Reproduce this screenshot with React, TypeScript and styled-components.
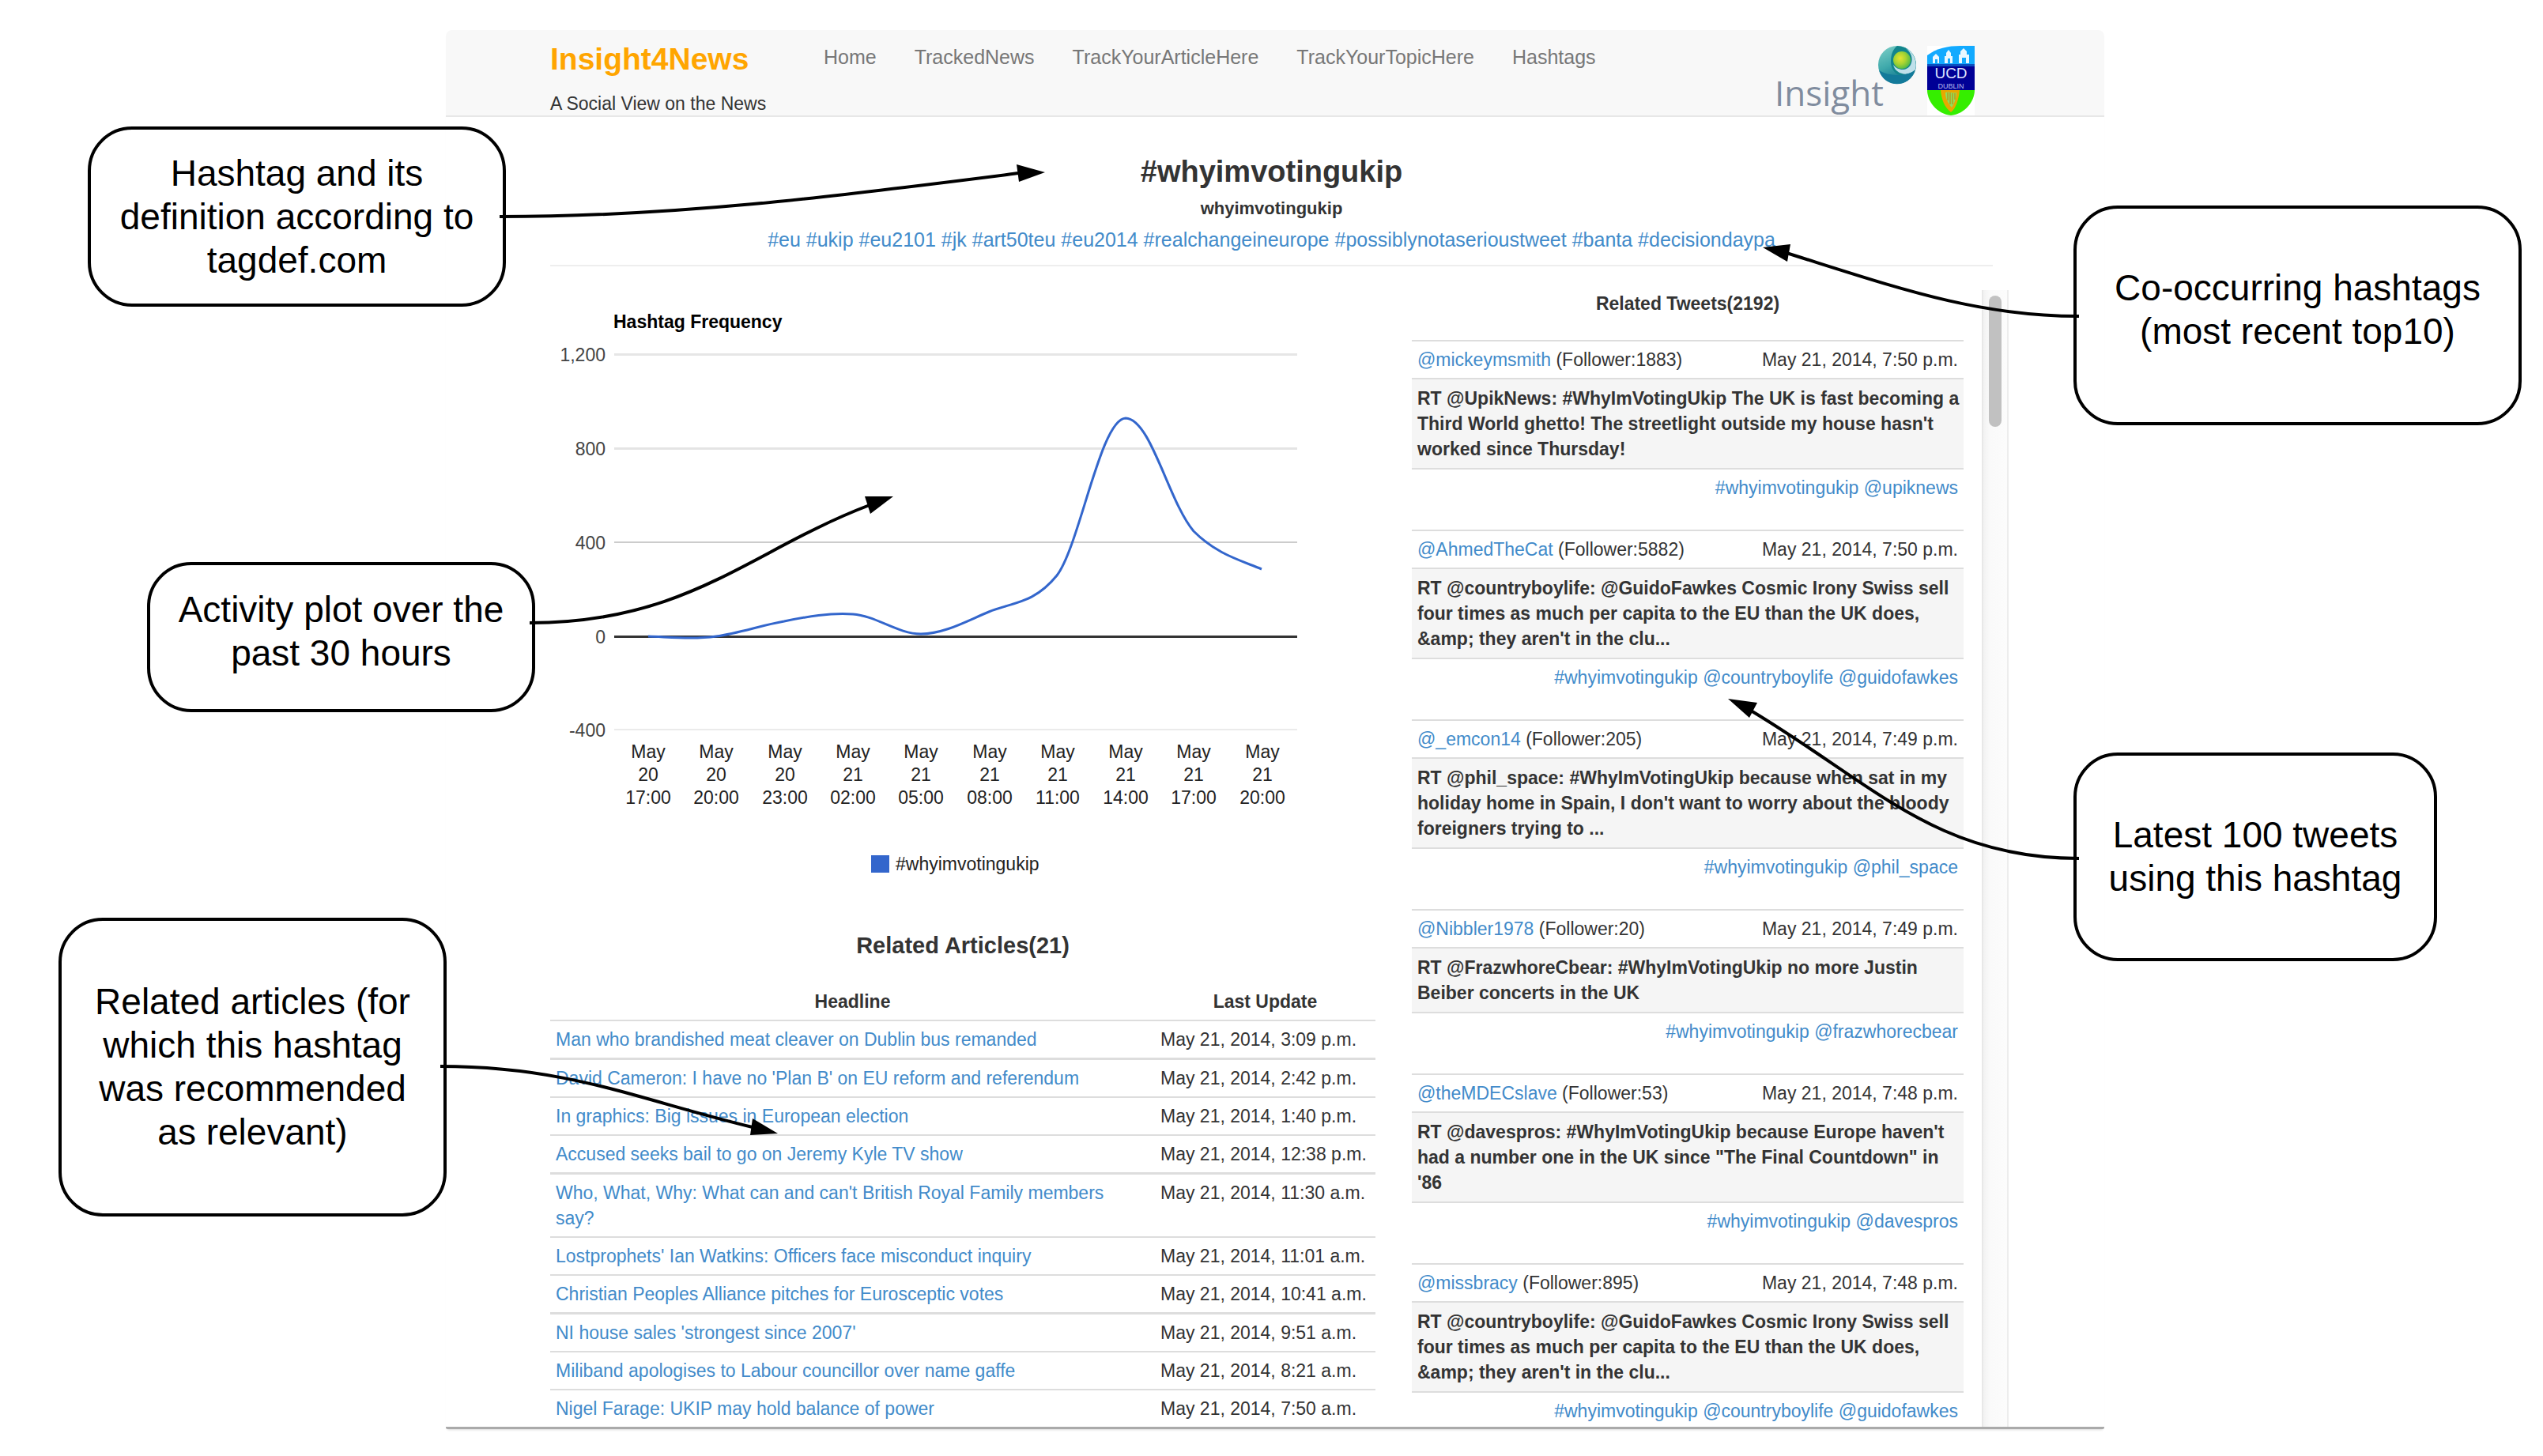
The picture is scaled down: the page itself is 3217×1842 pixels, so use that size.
import React from "react";
import styled, { createGlobalStyle } from "styled-components";

const sans = `"Liberation Sans", Arial, Helvetica, sans-serif`;
const linkBlue = "#428bca";
const ink = "#333";
const rule = "#ddd";

const GlobalStyle = createGlobalStyle`
  * { box-sizing: border-box; }
  body {
    margin: 0;
    background: #fff;
    color: ${ink};
    font-family: ${sans};
    font-size: 23px;
    line-height: 32px;
  }
`;

const Canvas = styled.div`
  position: relative;
  display: grid;
  grid-template-columns: 564fr 2098fr 555fr;
  padding-top: 38px;
  padding-bottom: 32px;
`;

const Site = styled.div`
  grid-column: 2;
  border-bottom: 3px solid #aaa;
  border-radius: 8px 8px 2px 2px;
  box-shadow: 0 3px 3px -2px rgba(0, 0, 0, 0.15);
`;

const TopBar = styled.header`
  display: flex;
  align-items: flex-start;
  height: 110px;
  padding: 0 164px 0 132px;
  background: #f8f8f8;
  border-bottom: 2px solid #e7e7e7;
  border-radius: 8px 8px 0 0;
`;

const Brand = styled.div`
  width: 346px;
  padding-top: 14px;
`;

const BrandName = styled.a`
  display: block;
  color: #ffa500;
  font-size: 39px;
  font-weight: bold;
  line-height: 46px;
  text-decoration: none;
`;

const Tagline = styled.p`
  margin: 17px 0 0;
  line-height: 32px;
  color: ${ink};
`;

const Nav = styled.nav`
  display: flex;
  gap: 48px;
  padding-top: 18px;
`;

const NavLink = styled.a`
  color: #777;
  font-size: 25px;
  line-height: 32px;
  text-decoration: none;
`;

const Logos = styled.div`
  display: flex;
  gap: 14px;
  margin-left: auto;
  padding-top: 20px;
`;

const Hero = styled.section`
  margin: 0 141px 0 132px;
  padding-top: 44px;
  padding-bottom: 14px;
  border-bottom: 2px solid #eee;
  text-align: center;
`;

const HeroTitle = styled.h1`
  margin: 0;
  font-size: 38px;
  line-height: 50px;
`;

const Definition = styled.p`
  margin: 6px 0 0;
  font-size: 22px;
  font-weight: bold;
  line-height: 32px;
`;

const TagList = styled.p`
  margin: 5px 0 0;
  font-size: 25px;
  line-height: 36px;
`;

const Link = styled.a`
  color: ${linkBlue};
  text-decoration: none;
`;

const Columns = styled.div`
  display: grid;
  grid-template-columns: minmax(0, 1044fr) minmax(0, 755fr);
  column-gap: 46px;
  margin-left: 132px;
  margin-right: 121px;
`;

const Main = styled.main`
  padding-top: 43px;
`;

const Chart = styled.svg`
  display: block;
  width: 100%;
  height: auto;
  font-family: ${sans};
  font-size: 23px;
`;

const SectionTitle = styled.h2`
  margin: 46px 0 28px;
  font-size: 29px;
  line-height: 40px;
  text-align: center;
`;

const ArticleTable = styled.table`
  width: 100%;
  border-collapse: separate;
  border-spacing: 0;
  table-layout: fixed;

  th {
    padding: 7px;
    text-align: center;
  }
  td {
    padding: 7px;
    vertical-align: top;
    border-top: 2px solid ${rule};
  }
  td:first-child {
    padding-right: 14px;
  }
  tr:nth-child(3n + 2) td {
    border-top-width: 3px;
  }
`;

const DateColumn = styled.col`
  width: 279px;
`;

const TweetPane = styled.aside`
  display: grid;
  grid-template-columns: minmax(0, 1fr) 34px;
  column-gap: 23px;
  margin-top: 30px;
`;

const Feed = styled.div`
  padding-top: 1px;
`;

const FeedTitle = styled.h3`
  margin: 0 0 30px;
  font-size: 23px;
  line-height: 32px;
  text-align: center;
`;

const Tweet = styled.article`
  padding-bottom: 35px;
  &:last-child {
    padding-bottom: 0;
  }
`;

const TweetHead = styled.div`
  display: flex;
  justify-content: space-between;
  padding: 7px;
  border-top: 2px solid ${rule};
`;

const TweetText = styled.p`
  margin: 0;
  padding: 8px 4px 8px 7px;
  background: #f5f5f5;
  border-top: 2px solid ${rule};
  font-weight: bold;
`;

const TweetTags = styled.div`
  padding: 7px 7px 2px;
  border-top: 2px solid ${rule};
  text-align: right;
`;

const ScrollTrack = styled.div`
  padding: 7px;
  background: linear-gradient(90deg, #f2f2f2, #fafafa 30%, #fcfcfc);
  border-left: 2px solid #e8e8e8;
  border-right: 2px solid #ededed;
`;

const ScrollThumb = styled.div`
  height: 166px;
  border-radius: 8px;
  background: #c1c1c1;
`;

const Callout = styled.div<{ $x: number; $y: number; $w: number; $h: number; $below: number }>`
  position: absolute;
  left: ${(p) => p.$x}px;
  top: ${(p) => p.$y}px;
  width: ${(p) => p.$w}px;
  height: ${(p) => p.$h}px;
  display: flex;
  align-items: center;
  justify-content: center;
  padding: 0 24px ${(p) => p.$below}px;
  border: 4px solid #000;
  border-radius: 56px;
  color: #000;
  font-size: 46px;
  line-height: 55px;
  text-align: center;
`;

const Arrows = styled.svg`
  position: absolute;
  left: 0;
  top: 0;
  pointer-events: none;
`;

const navItems = ["Home", "TrackedNews", "TrackYourArticleHere", "TrackYourTopicHere", "Hashtags"];

const coTags = [
  "#eu", "#ukip", "#eu2101", "#jk", "#art50teu", "#eu2014",
  "#realchangeineurope", "#possiblynotaserioustweet", "#banta", "#decisiondaypa",
];

const articles: [string, string][] = [
  ["Man who brandished meat cleaver on Dublin bus remanded", "May 21, 2014, 3:09 p.m."],
  ["David Cameron: I have no 'Plan B' on EU reform and referendum", "May 21, 2014, 2:42 p.m."],
  ["In graphics: Big issues in European election", "May 21, 2014, 1:40 p.m."],
  ["Accused seeks bail to go on Jeremy Kyle TV show", "May 21, 2014, 12:38 p.m."],
  ["Who, What, Why: What can and can't British Royal Family members say?", "May 21, 2014, 11:30 a.m."],
  ["Lostprophets' Ian Watkins: Officers face misconduct inquiry", "May 21, 2014, 11:01 a.m."],
  ["Christian Peoples Alliance pitches for Eurosceptic votes", "May 21, 2014, 10:41 a.m."],
  ["NI house sales 'strongest since 2007'", "May 21, 2014, 9:51 a.m."],
  ["Miliband apologises to Labour councillor over name gaffe", "May 21, 2014, 8:21 a.m."],
  ["Nigel Farage: UKIP may hold balance of power", "May 21, 2014, 7:50 a.m."],
];

const tweets = [
  {
    user: "@mickeymsmith", followers: 1883, time: "May 21, 2014, 7:50 p.m.",
    text: "RT @UpikNews: #WhyImVotingUkip The UK is fast becoming a Third World ghetto! The streetlight outside my house hasn't worked since Thursday!",
    tags: ["#whyimvotingukip", "@upiknews"],
  },
  {
    user: "@AhmedTheCat", followers: 5882, time: "May 21, 2014, 7:50 p.m.",
    text: "RT @countryboylife: @GuidoFawkes Cosmic Irony Swiss sell four times as much per capita to the EU than the UK does, &amp; they aren't in the clu...",
    tags: ["#whyimvotingukip", "@countryboylife", "@guidofawkes"],
  },
  {
    user: "@_emcon14", followers: 205, time: "May 21, 2014, 7:49 p.m.",
    text: "RT @phil_space: #WhyImVotingUkip because when sat in my holiday home in Spain, I don't want to worry about the bloody foreigners trying to ...",
    tags: ["#whyimvotingukip", "@phil_space"],
  },
  {
    user: "@Nibbler1978", followers: 20, time: "May 21, 2014, 7:49 p.m.",
    text: "RT @FrazwhoreCbear: #WhyImVotingUkip no more Justin Beiber concerts in the UK",
    tags: ["#whyimvotingukip", "@frazwhorecbear"],
  },
  {
    user: "@theMDECslave", followers: 53, time: "May 21, 2014, 7:48 p.m.",
    text: "RT @davespros: #WhyImVotingUkip because Europe haven't had a number one in the UK since \"The Final Countdown\" in '86",
    tags: ["#whyimvotingukip", "@davespros"],
  },
  {
    user: "@missbracy", followers: 895, time: "May 21, 2014, 7:48 p.m.",
    text: "RT @countryboylife: @GuidoFawkes Cosmic Irony Swiss sell four times as much per capita to the EU than the UK does, &amp; they aren't in the clu...",
    tags: ["#whyimvotingukip", "@countryboylife", "@guidofawkes"],
  },
];

const gridLines = [
  { label: "1,200", y: 68, thickness: 3, color: "#e6e6e6" },
  { label: "800", y: 187, thickness: 3, color: "#e4e4e4" },
  { label: "400", y: 306, thickness: 2, color: "#ccc" },
  { label: "0", y: 425, thickness: 3, color: "#333" },
  { label: "-400", y: 543, thickness: 2, color: "#ebebeb" },
];

const hours = [
  ["20", "17:00"], ["20", "20:00"], ["20", "23:00"], ["21", "02:00"], ["21", "05:00"],
  ["21", "08:00"], ["21", "11:00"], ["21", "14:00"], ["21", "17:00"], ["21", "20:00"],
];

function FrequencyChart() {
  return (
    <Chart viewBox="0 0 1044 750" role="img" aria-label="Hashtag Frequency">
      <text x="80" y="35" fontWeight="bold" fill="#000">Hashtag Frequency</text>
      {gridLines.map((g) => (
        <g key={g.label}>
          <rect x="81" y={g.y - 1} width="864" height={g.thickness} fill={g.color} />
          <text x="70" y={g.y + 9} textAnchor="end" fill="#444">{g.label}</text>
        </g>
      ))}
      <path
        d="M124 425 C153 426 181 429 210 425 C239 421 267 411 296 406 C325 400 354 395 383 397 C412 399 440 422 469 422 C498 422 526 406 555 394 C584 382 612 384 641 348 C670 310 696 150 728 149 C760 150 782 254 814 292 C843 321 871 328 900 340"
        fill="none"
        stroke="#3366cc"
        strokeWidth="3"
      />
      {hours.map(([day, hour], i) => {
        const x = 124 + Math.round(i * 86.3);
        return (
          <g key={i} textAnchor="middle" fill="#222">
            <text x={x} y="579">May</text>
            <text x={x} y="608">{day}</text>
            <text x={x} y="637">{hour}</text>
          </g>
        );
      })}
      <rect x="406" y="702" width="23" height="22" fill="#3366cc" />
      <text x="437" y="721" fill="#222">#whyimvotingukip</text>
    </Chart>
  );
}

function InsightLogo() {
  return (
    <svg width="178" height="88" viewBox="0 0 178 88" role="img" aria-label="Insight">
      <defs>
        <linearGradient id="globe" x1="0" y1="0" x2="0.4" y2="1">
          <stop offset="0" stopColor="#7fd0c8" />
          <stop offset="0.55" stopColor="#3fa9ab" />
          <stop offset="1" stopColor="#0f7290" />
        </linearGradient>
        <radialGradient id="core" cx="0.4" cy="0.4" r="0.65">
          <stop offset="0" stopColor="#e6e432" />
          <stop offset="0.5" stopColor="#a9d432" />
          <stop offset="1" stopColor="#4cb848" />
        </radialGradient>
      </defs>
      <text x="-1" y="76" fontFamily='"Open Sans", "Noto Sans", sans-serif' fontSize="44" fill="#808c9e">Insight</text>
      <circle cx="154" cy="24" r="24" fill="url(#globe)" />
      <path d="M154 0 a24 24 0 0 1 23 30 C170 44 146 40 146 20 C146 10 149 4 154 0Z" fill="#12858c" />
      <path d="M165 3 a24 24 0 0 1 12 27 C168 40 152 36 149 24 C154 31 166 33 171 24 C175 15 171 8 165 3Z" fill="#bfe0ea" />
      <path d="M131 31 C142 38 164 40 176 31 C170 54 138 54 131 31Z" fill="#137a9a" />
      <circle cx="160" cy="18" r="11" fill="url(#core)" />
    </svg>
  );
}

function UcdCrest() {
  return (
    <svg width="60" height="88" viewBox="0 0 60 88" role="img" aria-label="UCD Dublin" fontFamily={sans}>
      <rect width="60" height="88" fill="#fff" />
      <path d="M0 12 C12 3 26 0 42 0 L60 0 V24 H0Z" fill="#12aaff" />
      <g fill="#eaf8ff">
        <path d="M7 22 V14 L11 10 L15 14 V22 H13 V17 H10 V22Z" />
        <path d="M22 22 V13 H24 V9 L27 5 L30 9 V13 H32 V22 H29 V16 H26 V22Z" />
        <path d="M40 22 V11 H42 V7 L46 3 L50 7 V11 H53 V22 H49 V15 H44 V22Z" />
      </g>
      <rect y="23" width="60" height="33" fill="#000096" />
      <rect y="23" width="60" height="3" fill="#0a4fc0" />
      <text x="30" y="41" textAnchor="middle" fontSize="19" fill="#dfe3ff">UCD</text>
      <text x="30" y="54" textAnchor="middle" fontSize="9" fill="#b9bdf0">DUBLIN</text>
      <path d="M0 56 H60 C60 70 48 86 30 88 C12 86 0 70 0 56Z" fill="#35ee00" />
      <path d="M17 56 H41 C40 67 36 80 30 84 C22 78 18 68 17 56Z" fill="#e8a800" />
      <path d="M23 59 C28 57 33 61 37 59 C37 66 34 74 31 78 C26 72 23 66 23 59Z" fill="#8fe05a" />
      <path d="M26 59 V69 M29 59 V74 M32 60 V74 M35 60 V68" stroke="#c97a00" strokeWidth="1" />
    </svg>
  );
}

const connectors = [
  { line: "M632 274 C860 274 1060 248 1289 219", head: "1322,218 1286,208 1289,230" },
  { line: "M2630 400 C2500 400 2400 364 2260 320", head: "2230,313 2265,309 2261,331" },
  { line: "M670 788 C870 788 950 696 1100 639", head: "1130,628 1094,628 1101,650" },
  { line: "M2630 1086 C2450 1086 2370 992 2215 899", head: "2186,884 2223,889 2213,908" },
  { line: "M557 1349 C720 1349 810 1392 952 1426", head: "984,1434 952,1415 949,1436" },
];

const callouts = [
  { x: 111, y: 160, w: 529, h: 228, below: 0, text: "Hashtag and its definition according to tagdef.com" },
  { x: 2623, y: 260, w: 567, h: 278, below: 14, text: "Co-occurring hashtags (most recent top10)" },
  { x: 186, y: 711, w: 491, h: 190, below: 14, text: "Activity plot over the past 30 hours" },
  { x: 2623, y: 952, w: 460, h: 264, below: 0, text: "Latest 100 tweets using this hashtag" },
  { x: 74, y: 1161, w: 491, h: 378, below: 0, text: "Related articles (for which this hashtag was recommended as relevant)" },
];

export default function App() {
  return (
    <>
      <GlobalStyle />
      <Canvas>
        <Site>
          <TopBar>
            <Brand>
              <BrandName href="#">Insight4News</BrandName>
              <Tagline>A Social View on the News</Tagline>
            </Brand>
            <Nav>
              {navItems.map((n) => (
                <NavLink key={n} href="#">{n}</NavLink>
              ))}
            </Nav>
            <Logos>
              <InsightLogo />
              <UcdCrest />
            </Logos>
          </TopBar>

          <Hero>
            <HeroTitle>#whyimvotingukip</HeroTitle>
            <Definition>whyimvotingukip</Definition>
            <TagList>
              {coTags.map((t) => (
                <React.Fragment key={t}>
                  <Link href="#">{t}</Link>{" "}
                </React.Fragment>
              ))}
            </TagList>
          </Hero>

          <Columns>
            <Main>
              <FrequencyChart />
              <SectionTitle>Related Articles(21)</SectionTitle>
              <ArticleTable>
                <colgroup>
                  <col />
                  <DateColumn />
                </colgroup>
                <thead>
                  <tr>
                    <th scope="col">Headline</th>
                    <th scope="col">Last Update</th>
                  </tr>
                </thead>
                <tbody>
                  {articles.map(([title, date]) => (
                    <tr key={title}>
                      <td><Link href="#">{title}</Link></td>
                      <td>{date}</td>
                    </tr>
                  ))}
                </tbody>
              </ArticleTable>
            </Main>

            <TweetPane>
              <Feed>
                <FeedTitle>Related Tweets(2192)</FeedTitle>
                {tweets.map((t) => (
                  <Tweet key={t.user}>
                    <TweetHead>
                      <span><Link href="#">{t.user}</Link> (Follower:{t.followers})</span>
                      <time>{t.time}</time>
                    </TweetHead>
                    <TweetText>{t.text}</TweetText>
                    <TweetTags>
                      {t.tags.map((tag) => (
                        <React.Fragment key={tag}>
                          <Link href="#">{tag}</Link>{" "}
                        </React.Fragment>
                      ))}
                    </TweetTags>
                  </Tweet>
                ))}
              </Feed>
              <ScrollTrack>
                <ScrollThumb />
              </ScrollTrack>
            </TweetPane>
          </Columns>
        </Site>

        {callouts.map((c) => (
          <Callout key={c.text} $x={c.x} $y={c.y} $w={c.w} $h={c.h} $below={c.below}>{c.text}</Callout>
        ))}
        <Arrows width="3217" height="1800" viewBox="0 0 3217 1800" aria-hidden="true">
          {connectors.map((c) => (
            <g key={c.head}>
              <path d={c.line} fill="none" stroke="#000" strokeWidth="4" />
              <polygon points={c.head} fill="#000" />
            </g>
          ))}
        </Arrows>
      </Canvas>
    </>
  );
}
